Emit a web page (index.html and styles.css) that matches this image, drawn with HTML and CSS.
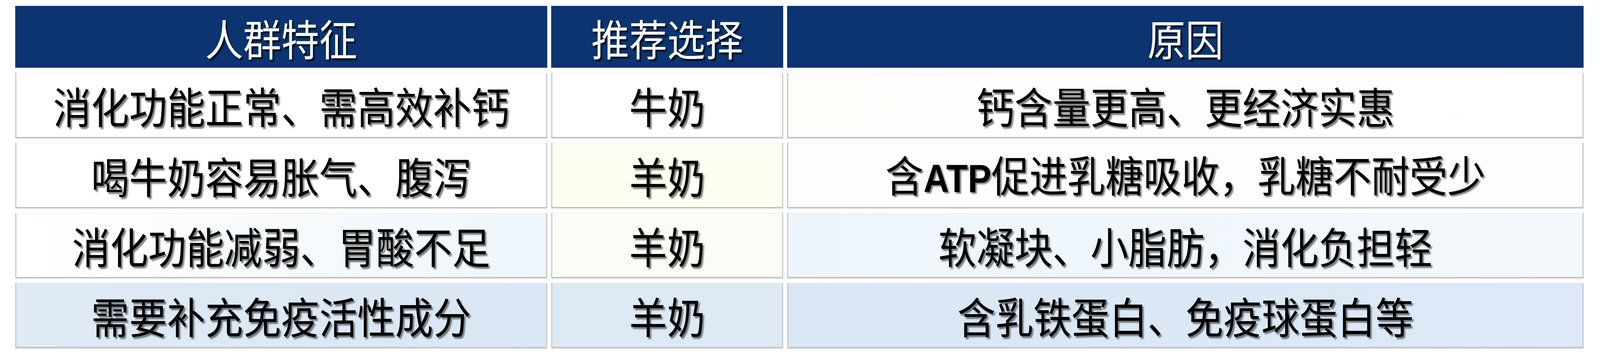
FILE: index.html
```html
<!DOCTYPE html>
<html lang="zh-CN">
<head>
<meta charset="utf-8">
<title>人群特征与推荐选择</title>
<link rel="stylesheet" href="styles.css">
</head>
<body>
<div class="table">
  <div class="cell head"><span class="t">人群特征</span></div>
  <div class="cell head"><span class="t">推荐选择</span></div>
  <div class="cell head"><span class="t">原因</span></div>

  <div class="cell r1 c1"><span class="t">消化功能正常、需高效补钙</span></div>
  <div class="cell r1 c2"><span class="t">牛奶</span></div>
  <div class="cell r1 c3"><span class="t">钙含量更高、更经济实惠</span></div>

  <div class="cell r2 c1"><span class="t">喝牛奶容易胀气、腹泻</span></div>
  <div class="cell r2 c2"><span class="t">羊奶</span></div>
  <div class="cell r2 c3"><span class="t">含<span class="latin">ATP</span>促进乳糖吸收，乳糖不耐受少</span></div>

  <div class="cell r3 c1"><span class="t">消化功能减弱、胃酸不足</span></div>
  <div class="cell r3 c2"><span class="t">羊奶</span></div>
  <div class="cell r3 c3"><span class="t">软凝块、小脂肪，消化负担轻</span></div>

  <div class="cell r4 c1"><span class="t">需要补充免疫活性成分</span></div>
  <div class="cell r4 c2"><span class="t">羊奶</span></div>
  <div class="cell r4 c3"><span class="t">含乳铁蛋白、免疫球蛋白等</span></div>
</div>
</body>
</html>
```

FILE: styles.css
```css
html, body {
  margin: 0;
  padding: 0;
  background: #ffffff;
}

body {
  font-family: "Noto Sans CJK SC", "Noto Sans", sans-serif;
  height: 905px;
  overflow: hidden;
}

.table {
  display: grid;
  grid-template-columns: 1539fr 671fr 2304fr;
  grid-template-rows: 160px repeat(4, 168px);
  column-gap: 0.26%;
  row-gap: 11px;
  padding: 15px 1.02% 0 0.95%;
}

.cell {
  box-sizing: border-box;
  min-width: 0;
  display: flex;
  align-items: center;
  justify-content: center;
  font-size: 2.376vw;
  font-weight: 400;
  line-height: 1;
  color: #000000;
  white-space: nowrap;
  border-left: 3px solid #c9c9c9;
  border-right: 3px solid #c9c9c9;
  border-bottom: 4px solid #c4c4c4;
  border-top: 1px solid #ececec;
  text-shadow: 4px 4px 3px rgba(0, 0, 0, 0.5);
}

.t {
  display: inline-block;
  transform: scaleY(1.12);
}

.head {
  background: #0b3470;
  color: #ffffff;
  border: none;
  border-bottom: 2px solid #dfe6ef;
  text-shadow: 4px 4px 3px rgba(0, 0, 0, 0.7);
  padding-top: 4px;
}

.latin {
  font-family: "Liberation Sans", "Noto Sans", sans-serif;
  font-weight: 700;
  font-size: 2.2vw;
}

.r1.c1 { background: #ffffff; }
.r1.c2 { background: #ffffff; }
.r1.c3 { background: linear-gradient(90deg, #fdfdfa, #ffffff); }

.r2.c1 { background: #ffffff; }
.r2.c2 { background: #fdfdf1; }
.r2.c3 { background: #fcfdfc; }

.r3.c1 { background: linear-gradient(90deg, #ffffff, #eef6fb); }
.r3.c2 { background: #fafcf6; }
.r3.c3 { background: linear-gradient(90deg, #edf5fb, #f3f8fc); }

.r4.c1 { background: linear-gradient(90deg, #dfeaf5, #dae7f4); }
.r4.c2 { background: #dde9f5; }
.r4.c3 { background: linear-gradient(90deg, #d9e7f5, #dde9f6); }
```
